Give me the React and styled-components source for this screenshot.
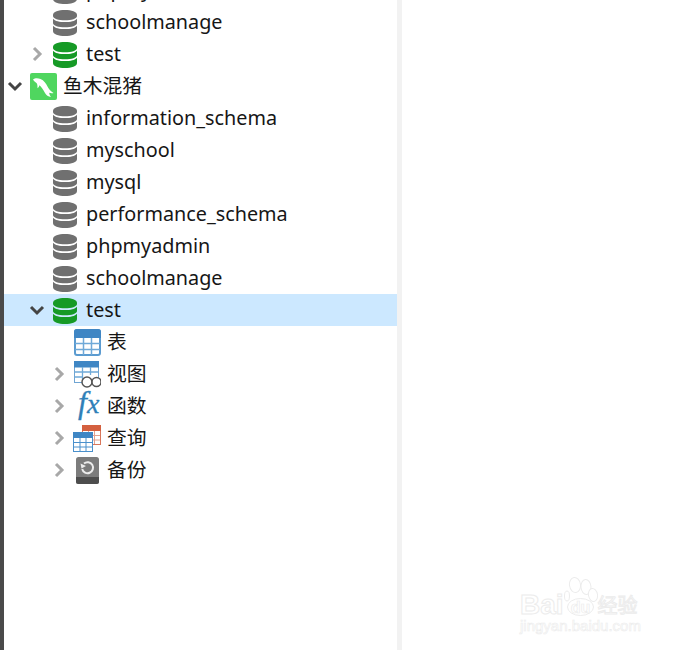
import styled, { createGlobalStyle } from "styled-components";

const GlobalStyle = createGlobalStyle`
  html, body {
    margin: 0;
    padding: 0;
    background: #fff;
  }
`;

// ── Layout ─────────────────────────────────────────────────────────

const Page = styled.div`
  position: relative;
  display: flex;
  width: 679px;
  height: 650px;
  overflow: hidden;
  background: #fff;
  font-family: "Noto Sans", "Noto Sans CJK SC", sans-serif;
`;

const Edge = styled.div`
  flex: 0 0 4px;
  background: #4a4a4a;
`;

const Sidebar = styled.div`
  flex: 0 0 393px;
  overflow: hidden;
`;

const Divider = styled.div`
  flex: 0 0 5px;
  background: #f2f2f2;
`;

const Tree = styled.div`
  display: flex;
  flex-direction: column;
  margin-top: -26px;
`;

const Row = styled.div`
  display: flex;
  align-items: center;
  height: 32px;
  flex: none;
  padding-left: ${({ $indent }) => $indent}px;
  background: ${({ $selected }) => ($selected ? "#cce8ff" : "transparent")};
`;

const Caret = styled.span`
  display: flex;
  align-items: center;
  justify-content: center;
  width: 22px;
  height: 32px;
  flex: none;
`;

const IconSlot = styled.span`
  display: flex;
  align-items: center;
  justify-content: center;
  width: 28px;
  height: 28px;
  flex: none;
  margin: 0 7px 0 3px;
`;

const Label = styled.span`
  font-size: 19.8px;
  line-height: 32px;
  color: #161616;
  white-space: nowrap;
  margin-left: ${({ $cjk }) => ($cjk ? "-1px" : "0")};
`;

const DbSvg = styled.svg`
  margin-top: 2px;
`;

const FxSvg = styled.svg`
  overflow: visible;
`;

// ── Watermark ──────────────────────────────────────────────────────

const Watermark = styled.div`
  position: absolute;
  left: 520px;
  top: 577px;
  width: 125px;
  height: 60px;
  font-family: "Liberation Sans", sans-serif;
  color: #fff;
  -webkit-text-stroke: 1px #ececec;
`;

const MarkBrand = styled.div`
  display: flex;
  align-items: flex-end;
  height: 40px;
`;

const MarkBai = styled.span`
  font-size: 28px;
  font-weight: 700;
  line-height: 28px;
  margin-bottom: -2px;
`;

const MarkPaw = styled.span`
  display: flex;
  width: 34px;
  height: 40px;
  flex: none;
`;

const MarkCn = styled.span`
  font-family: "Noto Sans CJK SC", sans-serif;
  font-size: 20px;
  line-height: 20px;
  margin-bottom: 2px;
`;

const MarkUrl = styled.div`
  font-size: 15px;
  line-height: 17px;
  -webkit-text-stroke: 0.6px #ececec;
  white-space: nowrap;
`;

// ── Icons ──────────────────────────────────────────────────────────

function CaretDown() {
  return (
    <svg width="16" height="12" viewBox="0 0 16 12">
      <path d="M2 3l6 6 6-6" fill="none" stroke="#444" strokeWidth="3" />
    </svg>
  );
}

function CaretRight() {
  return (
    <svg width="12" height="16" viewBox="0 0 12 16">
      <path d="M3 2l6 6-6 6" fill="none" stroke="#a8a8a8" strokeWidth="3" />
    </svg>
  );
}

function Database({ color }) {
  return (
    <DbSvg width="24" height="26" viewBox="0 0 24 26">
      <path d="M0 5C0 1.800 5.500 0 12 0s12 1.800 12 5v1c0 2.800-5.500 4.300-12 4.300S0 8.800 0 6z" fill={color} />
      <path d="M0 8.800c2 2.500 6.500 3.300 12 3.300s10-.8 12-3.300V13c0 2.800-5.500 4.300-12 4.300S0 15.800 0 13z" fill={color} />
      <path d="M0 15.800c2 2.500 6.500 3.300 12 3.300s10-.8 12-3.300V21c0 3.200-5.500 5-12 5S0 24.200 0 21z" fill={color} />
    </DbSvg>
  );
}

function Connection() {
  return (
    <svg width="27" height="27" viewBox="0 0 27 27">
      <rect width="27" height="27" rx="2" fill="#4fd65f" />
      <path
        d="M3 6.500C5 4.800 8 5 10.500 6c3.500 1.400 5.500 4.500 7 7.500 1.200 2.500 3 4.500 6 6.500-1.500.4-3 .2-4.300-.3.2 1.700.7 3 1.800 4.300-2.800-.4-4.800-1.800-6-4C13 16.500 11.500 14 9.500 12.300c-.3 1.300-1 2.300-2 3 0-2 0-3.700-.8-5C5.800 9 4 8.500 3 6.500z"
        fill="#fff"
      />
    </svg>
  );
}

function TableIcon() {
  return (
    <svg width="27" height="27" viewBox="0 0 27 27">
      <rect x="1" y="1" width="25" height="25" rx="2" fill="#fff" stroke="#5b9bd0" strokeWidth="2" />
      <path d="M0 3a3 3 0 0 1 3-3h21a3 3 0 0 1 3 3v6H0z" fill="#3f86c4" />
      <path d="M9.500 9v17M17.500 9v17M1 14.500h25M1 20.500h25" stroke="#6fa9d8" strokeWidth="1.500" />
    </svg>
  );
}

function ViewIcon() {
  return (
    <svg width="28" height="27" viewBox="0 0 28 27">
      <rect x="1.500" y=".5" width="24" height="21" fill="#fff" stroke="#6fa5d3" />
      <rect x="1" y="0" width="25" height="6.500" fill="#3f86c4" />
      <path d="M9.500 6v12M17.500 6v8M2 11h23M2 16h8" stroke="#6fa9d8" strokeWidth="1.300" />
      <circle cx="14" cy="21" r="5" fill="#fff" stroke="#555" strokeWidth="1.500" />
      <circle cx="23.500" cy="21" r="4.500" fill="#fff" stroke="#555" strokeWidth="1.500" />
    </svg>
  );
}

function FunctionIcon() {
  return (
    <FxSvg width="28" height="28" viewBox="0 0 28 28">
      <text
        x="5"
        y="21"
        fontFamily="Liberation Serif, serif"
        fontStyle="italic"
        fill="#2f7fb8"
        stroke="#2f7fb8"
        strokeWidth=".3"
      >
        <tspan fontSize="32">f</tspan>
        <tspan fontSize="28">x</tspan>
      </text>
    </FxSvg>
  );
}

function QueryIcon() {
  return (
    <svg width="28" height="27" viewBox="0 0 28 27">
      <rect x="9.500" y=".5" width="18" height="19" fill="#fff" stroke="#d9765a" />
      <rect x="9" y="0" width="19" height="6" fill="#d4603f" />
      <path d="M15.500 6v13M21.500 6v13M10 10.500h17M10 15h17" stroke="#e3a18e" />
      <rect x=".5" y="7.500" width="19" height="19" fill="#fff" stroke="#4a90cc" />
      <rect x="0" y="7" width="20" height="6" fill="#3f86c4" />
      <path d="M7 13v13M13 13v13M1 17.500h18M1 22h18" stroke="#4a90cc" />
    </svg>
  );
}

function BackupIcon() {
  return (
    <svg width="23" height="27" viewBox="0 0 23 27">
      <rect width="23" height="27" rx="2.500" fill="#7c7c7c" />
      <path d="M0 20h23v4.500a2.500 2.500 0 0 1-2.500 2.500h-18A2.500 2.500 0 0 1 0 24.500z" fill="#4d4d4d" />
      <path d="M8 6.500a5.500 5.500 0 1 1-1.800 5.500" fill="none" stroke="#ececec" strokeWidth="2" />
      <path d="M4.500 6.500l1 5 4.500-2.500z" fill="#ececec" />
    </svg>
  );
}

function Paw() {
  return (
    <svg width="34" height="40" viewBox="0 0 34 40" fill="#fff" stroke="#ececec" strokeWidth="1">
      <ellipse cx="3" cy="19" rx="2.500" ry="5" />
      <ellipse cx="11" cy="8" rx="5.500" ry="7.500" transform="rotate(-8 11 8)" />
      <ellipse cx="22" cy="10" rx="5" ry="7.500" transform="rotate(-5 22 10)" />
      <ellipse cx="29" cy="18" rx="4.500" ry="6.500" transform="rotate(-10 29 18)" />
      <ellipse cx="16.500" cy="30" rx="13" ry="8.500" />
      <text
        x="16.500"
        y="36"
        textAnchor="middle"
        fontSize="16"
        fontWeight="700"
        fontFamily="Liberation Sans, sans-serif"
        strokeWidth=".7"
      >
        du
      </text>
    </svg>
  );
}

// ── Data ───────────────────────────────────────────────────────────

const GREY = "#707070";
const GREEN = "#169a26";

const rows = [
  { indent: 22, label: "phpmyadmin", icon: <Database color={GREY} /> },
  { indent: 22, label: "schoolmanage", icon: <Database color={GREY} /> },
  { indent: 22, caret: "right", label: "test", icon: <Database color={GREEN} /> },
  { indent: 0, caret: "down", label: "鱼木混猪", icon: <Connection />, cjk: true },
  { indent: 22, label: "information_schema", icon: <Database color={GREY} /> },
  { indent: 22, label: "myschool", icon: <Database color={GREY} /> },
  { indent: 22, label: "mysql", icon: <Database color={GREY} /> },
  { indent: 22, label: "performance_schema", icon: <Database color={GREY} /> },
  { indent: 22, label: "phpmyadmin", icon: <Database color={GREY} /> },
  { indent: 22, label: "schoolmanage", icon: <Database color={GREY} /> },
  { indent: 22, caret: "down", label: "test", icon: <Database color={GREEN} />, selected: true },
  { indent: 44, label: "表", icon: <TableIcon />, cjk: true },
  { indent: 44, caret: "right", label: "视图", icon: <ViewIcon />, cjk: true },
  { indent: 44, caret: "right", label: "函数", icon: <FunctionIcon />, cjk: true },
  { indent: 44, caret: "right", label: "查询", icon: <QueryIcon />, cjk: true },
  { indent: 44, caret: "right", label: "备份", icon: <BackupIcon />, cjk: true },
];

export default function App() {
  return (
    <>
      <GlobalStyle />
      <Page>
        <Edge />
        <Sidebar>
          <Tree>
            {rows.map((row, i) => (
              <Row key={i} $indent={row.indent} $selected={row.selected}>
                <Caret>
                  {row.caret === "down" && <CaretDown />}
                  {row.caret === "right" && <CaretRight />}
                </Caret>
                <IconSlot>{row.icon}</IconSlot>
                <Label $cjk={row.cjk}>{row.label}</Label>
              </Row>
            ))}
          </Tree>
        </Sidebar>
        <Divider />
        <Watermark>
          <MarkBrand>
            <MarkBai>Bai</MarkBai>
            <MarkPaw>
              <Paw />
            </MarkPaw>
            <MarkCn>经验</MarkCn>
          </MarkBrand>
          <MarkUrl>jingyan.baidu.com</MarkUrl>
        </Watermark>
      </Page>
    </>
  );
}
